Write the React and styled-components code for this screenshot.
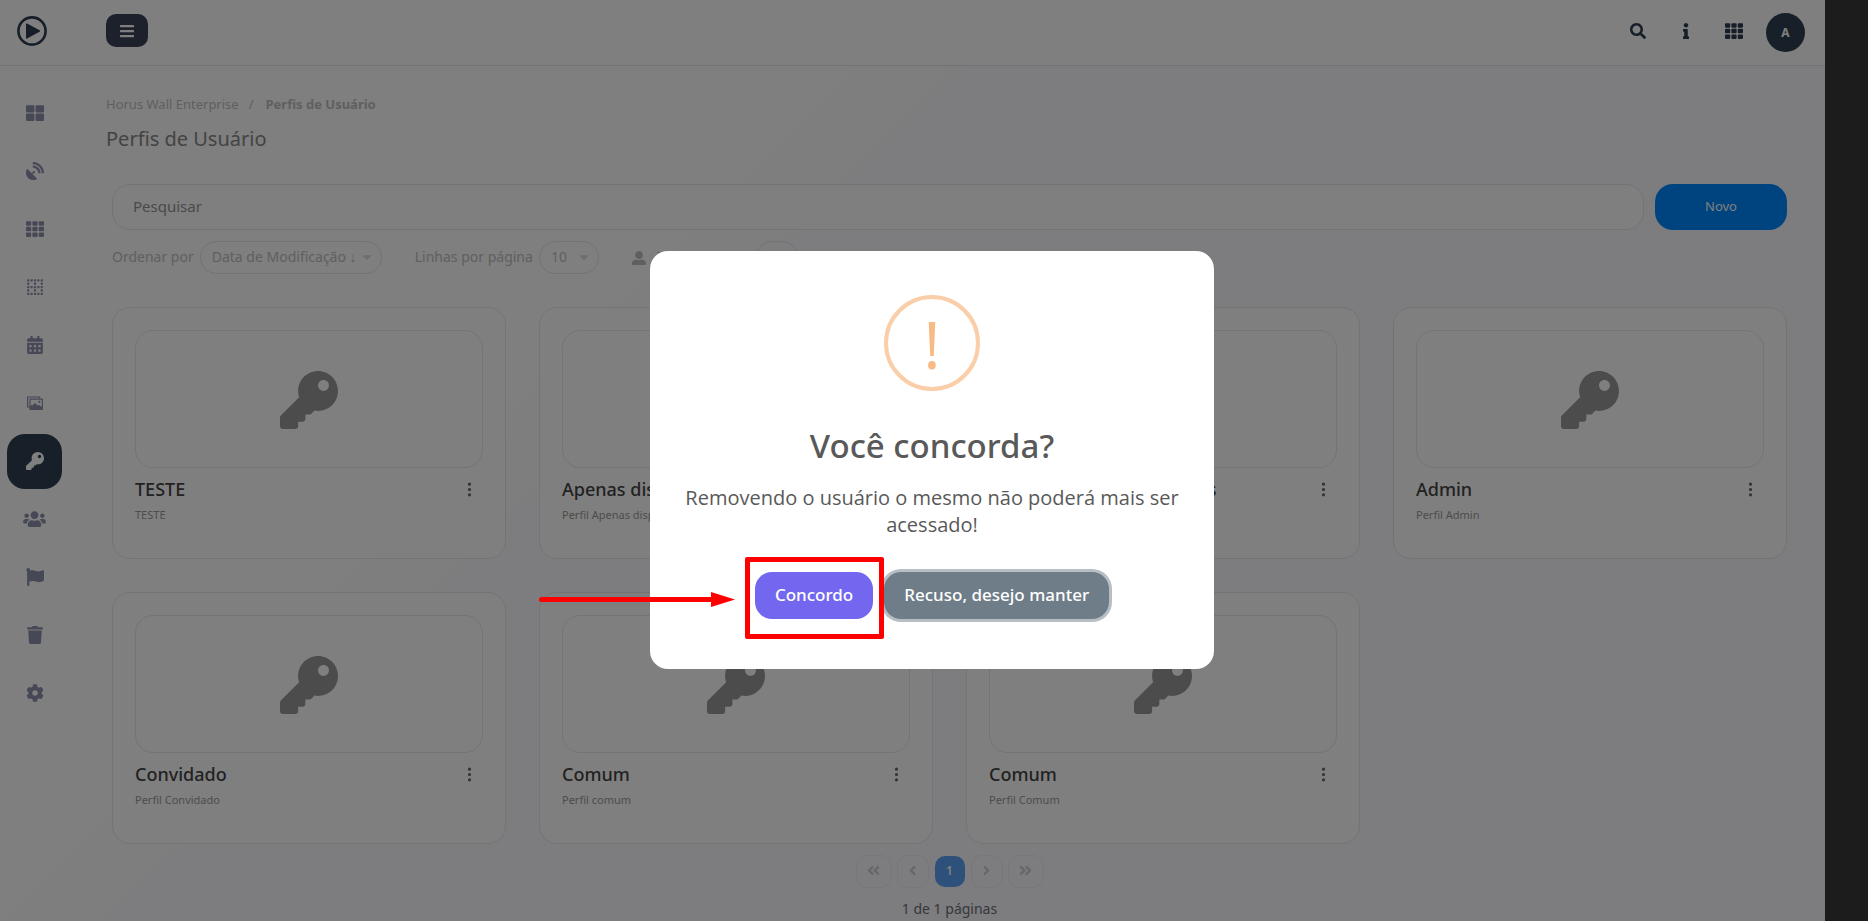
import styled, { createGlobalStyle } from "styled-components"
import {
    FaThLarge,
    FaSatelliteDish,
    FaTh,
    FaBorderNone,
    FaCalendarAlt,
    FaKey,
    FaUsers,
    FaFlag,
    FaTrash,
    FaCog,
    FaBars,
    FaSearch,
    FaInfo,
    FaCaretDown,
    FaAngleLeft,
    FaAngleRight,
    FaAngleDoubleLeft,
    FaAngleDoubleRight,
    FaUserAlt,
} from "react-icons/fa"
import { BsThreeDotsVertical } from "react-icons/bs"

const GlobalStyle = createGlobalStyle`
    * {
        box-sizing: border-box;
    }
    body {
        margin: 0;
        font-family: "Noto Sans", "Open Sans", sans-serif;
        font-size: 14px;
        color: #888;
    }
    button, input, select {
        font-family: inherit;
        margin: 0;
    }
    h1, h2, p {
        margin: 0;
    }
    `

const Layout = styled.div`
    display: flex;
    height: 100vh;
    min-height: 640px;
    overflow: hidden;
    background-color: #383838;
    `

const Page = styled.div`
    flex: 1;
    min-width: 0;
    display: flex;
    flex-direction: column;
    background: linear-gradient(135deg, #fff 31%, #fafaff 40%);
    `

const Strip = styled.aside`
    width: 43px;
    background-color: #383838;
    `

const Header = styled.header`
    display: flex;
    align-items: center;
    height: 66px;
    flex-shrink: 0;
    padding: 0 20px 2px 17px;
    border-bottom: 1px solid #e6e6ea;
    background-color: #fff;
    `

const Logo = styled.a`
    display: flex;
    width: 89px;
    margin-top: -2px;
    `

const MenuButton = styled.button`
    display: flex;
    align-items: center;
    justify-content: center;
    width: 42px;
    height: 33px;
    margin-top: -2px;
    border: 0;
    border-radius: 10px;
    background-color: #3b4258;
    color: #fff;
    font-size: 16px;
    `

const HeaderActions = styled.div`
    display: flex;
    align-items: center;
    margin-left: auto;
    `

const HeaderButton = styled.button`
    display: flex;
    align-items: center;
    justify-content: center;
    width: 48px;
    height: 40px;
    padding: 0 0 2px;
    border: 0;
    background: none;
    color: #2c3e50;
    font-size: ${props => props.$size || 16}px;
    `

const Avatar = styled.button`
    width: 39px;
    height: 39px;
    margin: 2px 0 0 8px;
    padding: 0;
    border: 0;
    border-radius: 50%;
    background-color: #2f4052;
    color: #fff;
    font-size: 12px;
    font-weight: 700;
    `

const Body = styled.div`
    display: flex;
    flex: 1;
    min-height: 0;
    `

const Sidebar = styled.nav`
    display: flex;
    flex-direction: column;
    gap: 3px;
    width: 106px;
    flex-shrink: 0;
    padding: 20px 0 0 7px;
    `

const SidebarLink = styled.a`
    display: flex;
    align-items: center;
    justify-content: center;
    width: 55px;
    height: 55px;
    flex-shrink: 0;
    padding-bottom: 2px;
    border-radius: 18px;
    background-color: ${props => props.$active ? "#2f4052" : "transparent"};
    color: ${props => props.$active ? "#fff" : "#8c90ac"};

    svg {
        width: ${props => props.$wide ? 23 : 18}px;
        height: 18px;
    }
    `

const Main = styled.main`
    flex: 1;
    min-width: 0;
    padding: 28px 38px 0 0;
    `

const Breadcrumb = styled.nav`
    display: flex;
    gap: 10px;
    font-size: 13px;
    line-height: 20px;
    color: #bebebe;

    a {
        color: inherit;
        text-decoration: none;
    }
    strong {
        margin-left: 2px;
    }
    `

const Title = styled.h1`
    margin-top: 10px;
    font-size: 20px;
    font-weight: 400;
    line-height: 30px;
    color: #888;
    `

const Content = styled.div`
    padding-left: 6px;
    `

const SearchRow = styled.form`
    display: flex;
    gap: 11px;
    margin-top: 30px;
    `

const SearchInput = styled.input`
    flex: 1;
    height: 46px;
    padding: 0 20px 2px;
    border: 1px solid #e6e6e6;
    border-radius: 18px;
    background-color: #fff;
    font-size: 15px;

    &::placeholder {
        color: #949494;
        opacity: 1;
    }
    `

const NewButton = styled.button`
    width: 132px;
    height: 46px;
    padding: 0 0 2px;
    border: 0;
    border-radius: 18px;
    background-color: #0088ff;
    color: #fff;
    font-size: 13px;
    `

const Filters = styled.div`
    display: flex;
    align-items: center;
    gap: 33px;
    margin-top: 11px;
    color: #bebebe;
    `

const Filter = styled.label`
    display: flex;
    align-items: center;
    gap: 6px;
    white-space: nowrap;
    `

const FilterName = styled.span`
    padding-bottom: 2px;
    `

const SelectBox = styled.span`
    position: relative;
    width: ${props => props.$width}px;

    svg {
        position: absolute;
        top: 9px;
        right: 8px;
        font-size: 14px;
        color: #dadada;
    }
    `

const Select = styled.select`
    appearance: none;
    display: block;
    width: 100%;
    height: 33px;
    padding: 0 11px 2px;
    border: 1px solid #e6e6e6;
    border-radius: 16px;
    background: none;
    color: #bebebe;
    font-size: 14px;
    `

const FilterIcon = styled.span`
    display: flex;
    margin-right: 5px;
    font-size: 14px;
    `

const Cards = styled.section`
    display: grid;
    grid-template-columns: repeat(4, 1fr);
    gap: 33px;
    margin-top: 33px;
    `

const Card = styled.article`
    height: 252px;
    padding: 22px;
    border: 1px solid #e8e8e8;
    border-radius: 18px;
    background-color: #fff;
    `

const CardPicture = styled.div`
    display: flex;
    align-items: center;
    justify-content: center;
    height: 138px;
    padding-top: 2px;
    border: 1px solid #e8e8e8;
    border-radius: 18px;
    color: #999;
    font-size: 58px;
    `

const CardHead = styled.div`
    display: flex;
    align-items: center;
    justify-content: space-between;
    height: 30px;
    margin-top: 6px;
    `

const CardTitle = styled.h2`
    font-size: 18px;
    font-weight: 500;
    color: #444;
    `

const CardMenu = styled.button`
    display: flex;
    align-items: center;
    justify-content: center;
    width: 27px;
    height: 27px;
    padding: 0;
    border: 0;
    background: none;
    color: #666;
    font-size: 17px;
    `

const CardText = styled.p`
    margin-top: 2px;
    font-size: 11px;
    line-height: 18px;
    color: #999;
    `

const Pagination = styled.nav`
    display: flex;
    align-items: center;
    justify-content: center;
    gap: 5px;
    margin-top: 11px;
    `

const PageButton = styled.button`
    display: flex;
    align-items: center;
    justify-content: center;
    width: ${props => props.$wide ? 36 : 32}px;
    height: 33px;
    padding: 0 0 2px;
    border: 1px solid ${props => props.$current ? "transparent" : "#efeff3"};
    border-radius: 11px;
    background-clip: padding-box;
    background-color: ${props => props.$current ? "#5ba3f5" : "transparent"};
    color: ${props => props.$current ? "#fff" : "#cfcfd4"};
    font-size: ${props => props.$current ? 12 : 15}px;
    font-weight: 600;
    `

const PageCount = styled.p`
    margin-top: 11px;
    line-height: 20px;
    text-align: center;
    color: #6e6e78;
    `

const Backdrop = styled.div`
    position: fixed;
    inset: 0;
    display: flex;
    align-items: center;
    justify-content: center;
    padding: 0 4px 2px 0;
    background-color: rgba(0, 0, 0, 0.5);
    `

const Dialog = styled.div`
    display: flex;
    flex-direction: column;
    align-items: center;
    width: 564px;
    padding: 44px 30px 50px;
    border-radius: 18px;
    background-color: #fff;
    color: #595959;
    text-align: center;
    `

const DialogIcon = styled.div`
    display: flex;
    align-items: center;
    justify-content: center;
    width: 96px;
    height: 96px;
    border: 4px solid #facea8;
    border-radius: 50%;
    color: #f8bb86;
    font-family: "Open Sans", sans-serif;
    font-size: 66px;
    line-height: 88px;
    `

const DialogTitle = styled.h2`
    margin-top: 35px;
    font-size: 33px;
    font-weight: 500;
    line-height: 40px;
    `

const DialogText = styled.p`
    margin-top: 18px;
    font-family: "Open Sans", sans-serif;
    font-size: 20px;
    line-height: 27px;
    `

const DialogActions = styled.div`
    display: flex;
    gap: 11px;
    margin-top: 34px;
    `

const DialogButton = styled.button`
    height: 47px;
    padding: 0 20px 2px;
    border: 0;
    border-radius: 17px;
    background-color: ${props => props.$color};
    box-shadow: ${props => props.$focused ? "0 0 0 3px #b7bec4" : "none"};
    color: #fff;
    font-size: 17px;
    font-weight: 500;
    `

const Marked = styled.div`
    position: relative;
    z-index: 1;
    `

const MarkBox = styled.span`
    position: absolute;
    inset: -15px -11px -20px -10px;
    border: 5px solid #f00;
    border-radius: 2px;
    pointer-events: none;
    `

const MarkArrow = styled.svg`
    position: absolute;
    top: 20px;
    left: -216px;
    pointer-events: none;
    `

function PicturesIcon() {
    return (
        <svg viewBox="0 0 16 18" fill="none" stroke="currentColor">
            <path d="M3 13 H0.6 V3 H12.6 V4.6" strokeWidth="1.2" />
            <rect x="3" y="5.1" width="12.4" height="10.2" rx="0.4" strokeWidth="1.2" />
            <path d="M3 15 V12.6 L4.6 11 L5.4 11.6 L8 8.8 L10.4 11.6 L11.6 10.8 L15.2 13.2 V15 Z" fill="currentColor" stroke="none" />
            <circle cx="12.4" cy="7.9" r="1.1" fill="currentColor" stroke="none" />
        </svg>
    )
}

const menu = [
    { label: "Painel", icon: FaThLarge },
    { label: "Dispositivos", icon: FaSatelliteDish },
    { label: "Grades", icon: FaTh },
    { label: "Layouts", icon: FaBorderNone },
    { label: "Agenda", icon: FaCalendarAlt },
    { label: "Mídias", icon: PicturesIcon },
    { label: "Perfis", icon: FaKey, active: true },
    { label: "Usuários", icon: FaUsers, wide: true },
    { label: "Alertas", icon: FaFlag },
    { label: "Lixeira", icon: FaTrash },
    { label: "Configurações", icon: FaCog },
]

const profiles = [
    { name: "TESTE", text: "TESTE" },
    { name: "Apenas dispositivos", text: "Perfil Apenas dispositivos" },
    { name: "Gerenciador de conteúdos", text: "Perfil Gerenciador" },
    { name: "Admin", text: "Perfil Admin" },
    { name: "Convidado", text: "Perfil Convidado" },
    { name: "Comum", text: "Perfil comum" },
    { name: "Comum", text: "Perfil Comum" },
]

function TopBar() {
    return (
        <Header>
            <Logo href="#" aria-label="Horus Wall">
                <svg width="30" height="30" viewBox="0 0 30 30">
                    <circle cx="15" cy="15" r="13.6" fill="none" stroke="#2c3e50" strokeWidth="2.6" />
                    <path d="M9.8 8.2 L22.2 15 L9.8 21.8 Z" fill="#2c3e50" stroke="#2c3e50" strokeWidth="1.6" strokeLinejoin="round" />
                </svg>
            </Logo>
            <MenuButton type="button" aria-label="Menu"><FaBars /></MenuButton>
            <HeaderActions>
                <HeaderButton type="button" aria-label="Buscar"><FaSearch /></HeaderButton>
                <HeaderButton type="button" aria-label="Informações"><FaInfo /></HeaderButton>
                <HeaderButton type="button" aria-label="Aplicativos" $size={18}><FaTh /></HeaderButton>
                <Avatar type="button">A</Avatar>
            </HeaderActions>
        </Header>
    )
}

function ProfileCard({ name, text }) {
    return (
        <Card>
            <CardPicture><FaKey /></CardPicture>
            <CardHead>
                <CardTitle>{name}</CardTitle>
                <CardMenu type="button" aria-label="Opções"><BsThreeDotsVertical /></CardMenu>
            </CardHead>
            <CardText>{text}</CardText>
        </Card>
    )
}

function ConfirmDialog() {
    return (
        <Backdrop>
            <Dialog role="dialog" aria-modal="true" aria-labelledby="confirm-title">
                <DialogIcon>!</DialogIcon>
                <DialogTitle id="confirm-title">Você concorda?</DialogTitle>
                <DialogText>Removendo o usuário o mesmo não poderá mais ser acessado!</DialogText>
                <DialogActions>
                    <Marked>
                        <DialogButton type="button" $color="#7367f0">Concordo</DialogButton>
                        <MarkBox />
                        <MarkArrow width="196" height="15" viewBox="0 0 196 15">
                            <path d="M2.5 7.5 H175" stroke="#f00" strokeWidth="5" strokeLinecap="round" />
                            <path d="M172 0 L196 7.5 L172 15 Z" fill="#f00" />
                        </MarkArrow>
                    </Marked>
                    <DialogButton type="button" $color="#6e7d88" $focused>Recuso, desejo manter</DialogButton>
                </DialogActions>
            </Dialog>
        </Backdrop>
    )
}

function App() {
    return (
        <>
            <GlobalStyle />
            <Layout>
                <Page>
                    <TopBar />
                    <Body>
                        <Sidebar>
                            {menu.map(({ label, icon: Icon, active, wide }) => (
                                <SidebarLink key={label} href="#" aria-label={label} $active={active} $wide={wide}>
                                    <Icon />
                                </SidebarLink>
                            ))}
                        </Sidebar>
                        <Main>
                            <Breadcrumb>
                                <a href="#">Horus Wall Enterprise</a>
                                <span>/</span>
                                <strong>Perfis de Usuário</strong>
                            </Breadcrumb>
                            <Title>Perfis de Usuário</Title>
                            <Content>
                                <SearchRow>
                                    <SearchInput type="text" placeholder="Pesquisar" aria-label="Pesquisar" />
                                    <NewButton type="button">Novo</NewButton>
                                </SearchRow>
                                <Filters>
                                    <Filter>
                                        <FilterName>Ordenar por</FilterName>
                                        <SelectBox $width={182}>
                                            <Select>
                                                <option>Data de Modificação ↓</option>
                                            </Select>
                                            <FaCaretDown />
                                        </SelectBox>
                                    </Filter>
                                    <Filter>
                                        <FilterName>Linhas por página</FilterName>
                                        <SelectBox $width={60}>
                                            <Select>
                                                <option>10</option>
                                            </Select>
                                            <FaCaretDown />
                                        </SelectBox>
                                    </Filter>
                                    <Filter>
                                        <FilterIcon><FaUserAlt /></FilterIcon>
                                        <FilterName>Total de perfis</FilterName>
                                        <SelectBox $width={42}>
                                            <Select>
                                                <option>7</option>
                                            </Select>
                                        </SelectBox>
                                    </Filter>
                                </Filters>
                                <Cards>
                                    {profiles.map((profile, index) => (
                                        <ProfileCard key={index} name={profile.name} text={profile.text} />
                                    ))}
                                </Cards>
                                <Pagination aria-label="Paginação">
                                    <PageButton type="button" $wide aria-label="Primeira"><FaAngleDoubleLeft /></PageButton>
                                    <PageButton type="button" aria-label="Anterior"><FaAngleLeft /></PageButton>
                                    <PageButton type="button" $current>1</PageButton>
                                    <PageButton type="button" aria-label="Próxima"><FaAngleRight /></PageButton>
                                    <PageButton type="button" $wide aria-label="Última"><FaAngleDoubleRight /></PageButton>
                                </Pagination>
                                <PageCount>1 de 1 páginas</PageCount>
                            </Content>
                        </Main>
                    </Body>
                </Page>
                <Strip />
            </Layout>
            <ConfirmDialog />
        </>
    )
}

export default App
